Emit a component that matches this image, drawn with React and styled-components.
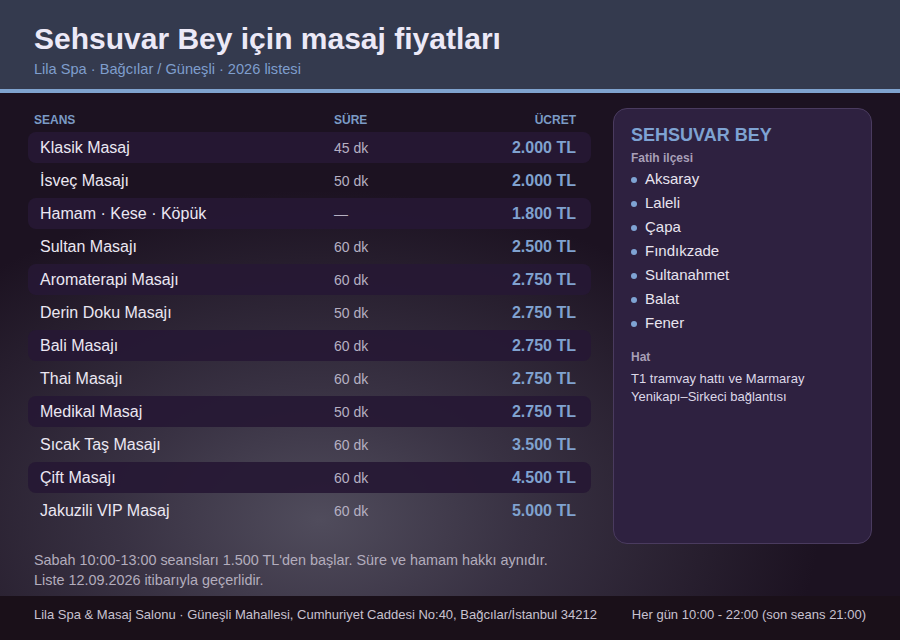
import React from "react";
import styled, { createGlobalStyle } from "styled-components";

const Global = createGlobalStyle`
  html, body { margin: 0; padding: 0; background: #1c1221; }
  body { font-family: "Liberation Sans", Arial, sans-serif; }
  * { box-sizing: border-box; }
`;

const Page = styled.div`
  width: 900px;
  height: 640px;
  display: flex;
  flex-direction: column;
  background:
    radial-gradient(ellipse 500px 330px at 320px 520px, rgba(80, 76, 92, 1) 0%, rgba(66, 60, 78, 0.75) 40%, rgba(28, 18, 33, 0) 100%),
    #1c1221;
  overflow: hidden;
`;

const Header = styled.header`
  background: #343a4e;
  padding: 21px 34px 11px;
  border-bottom: 4px solid #7fa3cf;
`;

const Title = styled.h1`
  margin: 0;
  font-size: 30px;
  line-height: 36px;
  font-weight: 700;
  color: #ece9f7;
`;

const Subtitle = styled.div`
  margin-top: 3px;
  font-size: 14.6px;
  line-height: 18px;
  color: #7f9ecd;
`;

const Main = styled.main`
  flex: 1;
  display: flex;
  flex-direction: column;
  padding: 15px 28px 6px;
`;

const Columns = styled.div`
  flex: 1;
  display: grid;
  grid-template-columns: 563px 259px;
  gap: 22px;
`;

const Table = styled.div`
  display: flex;
  flex-direction: column;
  gap: 2px;
`;

const HeadRow = styled.div`
  display: grid;
  grid-template-columns: 300px 1fr auto;
  align-items: center;
  height: 22px;
  padding: 2px 15px 0 6px;
  font-size: 12px;
  font-weight: 700;
  color: #7b9bc5;
`;

const HeadCell = styled.div`
  text-align: ${(p) => (p.$right ? "right" : "left")};
`;

const Row = styled.div`
  display: grid;
  grid-template-columns: 294px 1fr auto;
  align-items: center;
  height: 31px;
  padding: 1px 15px 0 12px;
  border-radius: 8px;
  background: ${(p) => (p.$striped ? "rgba(38, 24, 52, 0.92)" : "transparent")};
`;

const Name = styled.div`
  font-size: 16px;
  color: #ebe7f2;
`;

const Duration = styled.div`
  font-size: 14px;
  color: #b6b0c2;
`;

const Price = styled.div`
  font-size: 16px;
  font-weight: 700;
  color: #80a2cf;
  text-align: right;
`;

const Card = styled.aside`
  background: #2e2140;
  border: 1px solid #4a3b5f;
  border-radius: 14px;
  padding: 15px 17px;
  display: flex;
  flex-direction: column;
`;

const CardTitle = styled.div`
  font-size: 18px;
  line-height: 22px;
  font-weight: 700;
  color: #7ea3d3;
`;

const Label = styled.div`
  font-size: 12px;
  line-height: 15px;
  font-weight: 700;
  color: #a89fb7;
  margin-top: ${(p) => p.$mt || 0}px;
`;

const List = styled.ul`
  list-style: none;
  margin: 1px 0 0;
  padding: 0;
`;

const Item = styled.li`
  display: flex;
  align-items: center;
  gap: 8px;
  font-size: 15px;
  line-height: 24px;
  color: #e8e4ef;
  &::before {
    content: "";
    width: 6px;
    height: 6px;
    border-radius: 50%;
    background: #7fa3d3;
    margin-top: 2px;
  }
`;

const Transit = styled.div`
  margin-top: 5px;
  font-size: 13px;
  line-height: 18px;
  color: #ddd8e8;
`;

const Notes = styled.div`
  margin-top: 6px;
  padding-left: 6px;
  font-size: 14.4px;
  line-height: 20px;
  color: #b3adbd;
`;

const Footer = styled.footer`
  height: 44px;
  flex-shrink: 0;
  background: #1a1019;
  padding: 11px 34px 0;
  display: flex;
  justify-content: space-between;
  font-size: 13px;
  line-height: 16px;
  color: #c8c2d0;
`;

const rows = [
  ["Klasik Masaj", "45 dk", "2.000 TL"],
  ["İsveç Masajı", "50 dk", "2.000 TL"],
  ["Hamam · Kese · Köpük", "—", "1.800 TL"],
  ["Sultan Masajı", "60 dk", "2.500 TL"],
  ["Aromaterapi Masajı", "60 dk", "2.750 TL"],
  ["Derin Doku Masajı", "50 dk", "2.750 TL"],
  ["Bali Masajı", "60 dk", "2.750 TL"],
  ["Thai Masajı", "60 dk", "2.750 TL"],
  ["Medikal Masaj", "50 dk", "2.750 TL"],
  ["Sıcak Taş Masajı", "60 dk", "3.500 TL"],
  ["Çift Masajı", "60 dk", "4.500 TL"],
  ["Jakuzili VIP Masaj", "60 dk", "5.000 TL"],
];

const places = ["Aksaray", "Laleli", "Çapa", "Fındıkzade", "Sultanahmet", "Balat", "Fener"];

export default function App() {
  return (
    <>
      <Global />
      <Page>
        <Header>
          <Title>Sehsuvar Bey için masaj fiyatları</Title>
          <Subtitle>Lila Spa · Bağcılar / Güneşli · 2026 listesi</Subtitle>
        </Header>
        <Main>
          <Columns>
            <Table>
              <HeadRow>
                <HeadCell>SEANS</HeadCell>
                <HeadCell>SÜRE</HeadCell>
                <HeadCell $right>ÜCRET</HeadCell>
              </HeadRow>
              {rows.map(([n, d, p], i) => (
                <Row key={n} $striped={i % 2 === 0}>
                  <Name>{n}</Name>
                  <Duration>{d}</Duration>
                  <Price>{p}</Price>
                </Row>
              ))}
            </Table>
            <Card>
              <CardTitle>SEHSUVAR BEY</CardTitle>
              <Label $mt={5}>Fatih ilçesi</Label>
              <List>
                {places.map((p) => (
                  <Item key={p}>{p}</Item>
                ))}
              </List>
              <Label $mt={15}>Hat</Label>
              <Transit>T1 tramvay hattı ve Marmaray Yenikapı–Sirkeci bağlantısı</Transit>
            </Card>
          </Columns>
          <Notes>
            Sabah 10:00-13:00 seansları 1.500 TL'den başlar. Süre ve hamam hakkı aynıdır.
            <br />
            Liste 12.09.2026 itibarıyla geçerlidir.
          </Notes>
        </Main>
        <Footer>
          <span>Lila Spa &amp; Masaj Salonu · Güneşli Mahallesi, Cumhuriyet Caddesi No:40, Bağcılar/İstanbul 34212</span>
          <span>Her gün 10:00 - 22:00 (son seans 21:00)</span>
        </Footer>
      </Page>
    </>
  );
}
